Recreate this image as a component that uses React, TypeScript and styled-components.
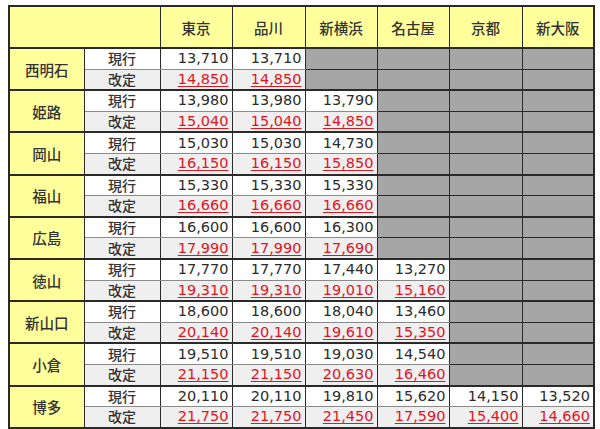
import React from 'react';
import styled, { createGlobalStyle, css } from 'styled-components';

const GlobalStyle = createGlobalStyle`
  html, body {
    margin: 0;
    padding: 0;
    background: #ffffff;
  }
  body {
    font-family: "DejaVu Sans", "Noto Sans CJK JP", sans-serif;
    color: #2b2b2b;
  }
`;

const Page = styled.div`
  padding: 5px 0 0 8px;
`;

const Table = styled.table`
  border-collapse: collapse;
  table-layout: fixed;
  width: 585px;
  border: 2px solid #2a2a2a;
`;

const HeadCell = styled.th`
  height: 40px;
  background: #ffff9c;
  border: 1px solid #2a2a2a;
  border-bottom: 2px solid #2a2a2a;
  font-family: "Noto Sans CJK JP", sans-serif;
  font-weight: 500;
  font-size: 14.5px;
  color: #333;
  text-align: center;
  padding: 0;
`;

const StationCell = styled.td`
  background: #ffff9c;
  border: 1px solid #2a2a2a;
  border-bottom: 2px solid #2a2a2a;
  font-family: "Noto Sans CJK JP", sans-serif;
  font-weight: 500;
  font-size: 14.5px;
  color: #333;
  text-align: center;
  padding: 0;
`;

const rowLine = css<{ $revised: boolean }>`
  border-left: 1px solid #2a2a2a;
  border-right: 1px solid #2a2a2a;
  border-top: ${p => (p.$revised ? '1px solid #8a8a8a' : '2px solid #2a2a2a')};
  border-bottom: ${p => (p.$revised ? '2px solid #2a2a2a' : '1px solid #8a8a8a')};
`;

const LabelCell = styled.td<{ $revised: boolean }>`
  ${rowLine}
  height: 19.6px;
  padding: 0;
  background: ${p => (p.$revised ? '#efefef' : '#ffffff')};
  font-family: "Noto Sans CJK JP", sans-serif;
  font-weight: 500;
  font-size: 14px;
  color: #333;
  text-align: center;
  line-height: 17px;
`;

const ValueCell = styled.td<{ $revised: boolean; $empty: boolean }>`
  ${rowLine}
  height: 19.6px;
  padding: 0 3px 0 0;
  background: ${p => (p.$empty ? '#a6a6a6' : p.$revised ? '#efefef' : '#ffffff')};
  ${p => p.$empty && css`border-top-color: #2a2a2a; border-bottom-color: #2a2a2a;`}
  font-size: 14.5px;
  line-height: 17px;
  text-align: right;
  color: ${p => (p.$revised ? '#e0141e' : '#2b2b2b')};
  text-decoration: ${p => (p.$revised ? 'underline' : 'none')};
  text-decoration-color: #d81b22;
  text-underline-offset: 2px;
`;

const widths = [75, 76, 72, 73, 72, 72, 73, 72];
const destinations = ['東京', '品川', '新横浜', '名古屋', '京都', '新大阪'];

type Fare = { station: string; current: string[]; revised: string[] };

const fares: Fare[] = [
  { station: '西明石', current: ['13,710', '13,710'], revised: ['14,850', '14,850'] },
  { station: '姫路', current: ['13,980', '13,980', '13,790'], revised: ['15,040', '15,040', '14,850'] },
  { station: '岡山', current: ['15,030', '15,030', '14,730'], revised: ['16,150', '16,150', '15,850'] },
  { station: '福山', current: ['15,330', '15,330', '15,330'], revised: ['16,660', '16,660', '16,660'] },
  { station: '広島', current: ['16,600', '16,600', '16,300'], revised: ['17,990', '17,990', '17,690'] },
  { station: '徳山', current: ['17,770', '17,770', '17,440', '13,270'], revised: ['19,310', '19,310', '19,010', '15,160'] },
  { station: '新山口', current: ['18,600', '18,600', '18,040', '13,460'], revised: ['20,140', '20,140', '19,610', '15,350'] },
  { station: '小倉', current: ['19,510', '19,510', '19,030', '14,540'], revised: ['21,150', '21,150', '20,630', '16,460'] },
  {
    station: '博多',
    current: ['20,110', '20,110', '19,810', '15,620', '14,150', '13,520'],
    revised: ['21,750', '21,750', '21,450', '17,590', '15,400', '14,660'],
  },
];

const FareRow: React.FC<{ values: string[]; revised: boolean; station?: string }> = ({ values, revised, station }) => (
  <tr>
    {station && <StationCell rowSpan={2}>{station}</StationCell>}
    <LabelCell $revised={revised}>{revised ? '改定' : '現行'}</LabelCell>
    {destinations.map((d, i) => (
      <ValueCell key={d} $revised={revised} $empty={!values[i]}>
        {values[i] ?? ''}
      </ValueCell>
    ))}
  </tr>
);

export default function App() {
  return (
    <Page>
      <GlobalStyle />
      <Table>
        <colgroup>
          {widths.map((w, i) => (
            <col key={i} style={{ width: w }} />
          ))}
        </colgroup>
        <thead>
          <tr>
            <HeadCell colSpan={2} />
            {destinations.map(d => (
              <HeadCell key={d}>{d}</HeadCell>
            ))}
          </tr>
        </thead>
        <tbody>
          {fares.map(f => (
            <React.Fragment key={f.station}>
              <FareRow station={f.station} values={f.current} revised={false} />
              <FareRow values={f.revised} revised />
            </React.Fragment>
          ))}
        </tbody>
      </Table>
    </Page>
  );
}
